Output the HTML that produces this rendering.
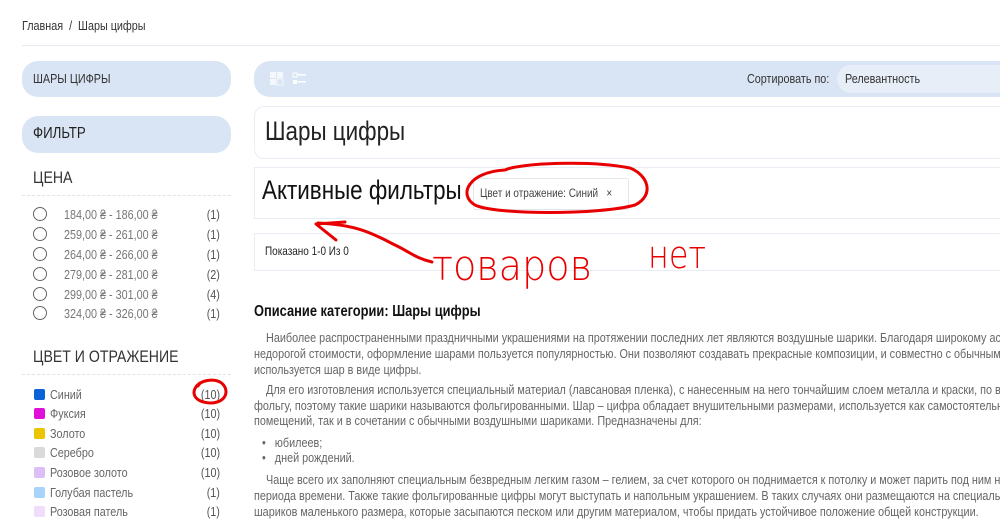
<!DOCTYPE html>
<html><head><meta charset="utf-8"><style>
html,body{margin:0;padding:0;width:1000px;height:524px;overflow:hidden;background:#fff;}
body{font-family:"Liberation Sans","Noto Sans CJK SC",sans-serif;color:#222;position:relative;}
.a{position:absolute;white-space:nowrap;}
.t{position:absolute;white-space:nowrap;transform:scaleX(.83);transform-origin:0 0;}
.box{position:absolute;background:#d9e5f4;border-radius:16px;}
.wb{position:absolute;border:1px solid #e8edf3;border-radius:10px 0 0 10px;border-right:none;}
.radio{position:absolute;left:33px;width:12px;height:12px;border:1.5px solid #666;border-radius:50%;}
.pr{position:absolute;left:64px;font-size:13px;color:#777;white-space:nowrap;transform:scaleX(.83);transform-origin:0 0;}
.cnt{position:absolute;right:780px;font-size:13px;color:#555;transform:scaleX(.83);transform-origin:100% 0;}
.sw{position:absolute;left:34px;width:11px;height:11px;border-radius:2px;}
.cl{position:absolute;left:50px;font-size:13px;color:#666;white-space:nowrap;transform:scaleX(.83);transform-origin:0 0;}
.p{position:absolute;left:254px;font-size:12.5px;color:#666;white-space:nowrap;transform:scaleX(.865);transform-origin:0 0;}
</style></head><body>
<div class="t" style="left:22px;top:18px;font-size:13px;color:#333">Главная &nbsp;/&nbsp; Шары цифры</div>
<div class="a" style="left:22px;top:45px;width:978px;height:1px;background:#e6ebf2"></div>

<div class="box" style="left:22px;top:61px;width:209px;height:36px"></div>
<div class="t" style="left:33px;top:71px;font-size:13px;color:#333">ШАРЫ ЦИФРЫ</div>
<div class="box" style="left:22px;top:116px;width:209px;height:37px"></div>
<div class="t" style="left:33px;top:125px;font-size:16px;color:#222">ФИЛЬТР</div>
<div class="t" style="left:33px;top:168px;font-size:17px;color:#333">ЦЕНА</div>
<div class="a" style="left:22px;top:195px;width:209px;border-top:1px dashed #dde3ea"></div>

<div class="radio" style="top:207px"></div><div class="pr" style="top:207px">184,00 ₴ - 186,00 ₴</div><div class="cnt" style="top:207px">(1)</div>
<div class="radio" style="top:227px"></div><div class="pr" style="top:227px">259,00 ₴ - 261,00 ₴</div><div class="cnt" style="top:227px">(1)</div>
<div class="radio" style="top:247px"></div><div class="pr" style="top:247px">264,00 ₴ - 266,00 ₴</div><div class="cnt" style="top:247px">(1)</div>
<div class="radio" style="top:267px"></div><div class="pr" style="top:267px">279,00 ₴ - 281,00 ₴</div><div class="cnt" style="top:267px">(2)</div>
<div class="radio" style="top:287px"></div><div class="pr" style="top:287px">299,00 ₴ - 301,00 ₴</div><div class="cnt" style="top:287px">(4)</div>
<div class="radio" style="top:306px"></div><div class="pr" style="top:306px">324,00 ₴ - 326,00 ₴</div><div class="cnt" style="top:306px">(1)</div>

<div class="t" style="left:33px;top:347px;font-size:17px;color:#333">ЦВЕТ И ОТРАЖЕНИЕ</div>
<div class="a" style="left:22px;top:374px;width:209px;border-top:1px dashed #dde3ea"></div>
<div class="sw" style="top:389px;background:#0b63d6"></div><div class="cl" style="top:387px">Синий</div><div class="cnt" style="top:387px">(10)</div>
<div class="sw" style="top:408px;background:#e010d8"></div><div class="cl" style="top:406px">Фуксия</div><div class="cnt" style="top:406px">(10)</div>
<div class="sw" style="top:428px;background:#ecc400"></div><div class="cl" style="top:426px">Золото</div><div class="cnt" style="top:426px">(10)</div>
<div class="sw" style="top:447px;background:#dadada"></div><div class="cl" style="top:445px">Серебро</div><div class="cnt" style="top:445px">(10)</div>
<div class="sw" style="top:467px;background:#dcbff7"></div><div class="cl" style="top:465px">Розовое золото</div><div class="cnt" style="top:465px">(10)</div>
<div class="sw" style="top:487px;background:#a8d4fb"></div><div class="cl" style="top:485px">Голубая пастель</div><div class="cnt" style="top:485px">(1)</div>
<div class="sw" style="top:506px;background:#f0dcfb"></div><div class="cl" style="top:504px">Розовая патель</div><div class="cnt" style="top:504px">(1)</div>

<div class="box" style="left:254px;top:61px;width:760px;height:36px;border-radius:16px 0 0 16px"></div>
<svg class="a" style="left:268px;top:70px" width="40" height="20">
<rect x="2" y="2" width="6" height="6" fill="#f4f8fd"/><rect x="9" y="2" width="6" height="6" fill="#f4f8fd"/><rect x="2" y="9" width="6" height="6" fill="#f4f8fd"/><rect x="9" y="9" width="6" height="6" fill="none" stroke="#f4f8fd"/>
<rect x="25" y="3" width="4" height="4" fill="none" stroke="#fff"/><rect x="30" y="4" width="8" height="1.5" fill="#fff"/><rect x="25" y="10" width="4" height="4" fill="#fff"/><rect x="30" y="11" width="8" height="1.5" fill="#fff"/>
</svg>
<div class="t" style="left:747px;top:71px;font-size:13px;color:#333">Сортировать по:</div>
<div class="a" style="left:837px;top:65px;width:170px;height:28px;background:#e7eef8;border-radius:14px 0 0 14px"></div>
<div class="t" style="left:845px;top:71px;font-size:13px;color:#333">Релевантность</div>

<div class="wb" style="left:254px;top:106px;width:750px;height:51px"></div>
<div class="t" style="left:265px;top:116px;font-size:27px;color:#222">Шары цифры</div>
<div class="wb" style="left:254px;top:167px;width:750px;height:50px;border-radius:0"></div>
<div class="t" style="left:262px;top:175px;font-size:27px;color:#111">Активные фильтры</div>
<div class="a" style="left:473px;top:178px;width:154px;height:30px;border:1px solid #e3e7ec;border-radius:3px"></div>
<div class="t" style="left:480px;top:186px;font-size:12px;color:#444">Цвет и отражение: Синий &nbsp;&nbsp;×</div>
<div class="wb" style="left:254px;top:233px;width:750px;height:36px;border-radius:0"></div>
<div class="t" style="left:265px;top:244px;font-size:12px;color:#222">Показано 1-0 Из 0</div>

<div class="t" style="left:254px;top:303px;font-size:15.5px;font-weight:bold;color:#111">Описание категории: Шары цифры</div>
<div class="p" style="top:331px">&nbsp;&nbsp;&nbsp;&nbsp;Наиболее распространенными праздничными украшениями на протяжении последних лет являются воздушные шарики. Благодаря широкому ассортименту</div>
<div class="p" style="top:347px">недорогой стоимости, оформление шарами пользуется популярностью. Они позволяют создавать прекрасные композиции, и совместно с обычными в</div>
<div class="p" style="top:363px">используется шар в виде цифры.</div>
<div class="p" style="top:383px">&nbsp;&nbsp;&nbsp;&nbsp;Для его изготовления используется специальный материал (лавсановая пленка), с нанесенным на него тончайшим слоем металла и краски, по внешнему</div>
<div class="p" style="top:399px">фольгу, поэтому такие шарики называются фольгированными. Шар – цифра обладает внушительными размерами, используется как самостоятельный</div>
<div class="p" style="top:414px">помещений, так и в сочетании с обычными воздушными шариками. Предназначены для:</div>
<div class="p" style="top:436px;left:262px">•&nbsp;&nbsp; юбилеев;</div>
<div class="p" style="top:451px;left:262px">•&nbsp;&nbsp; дней рождений.</div>
<div class="p" style="top:473px">&nbsp;&nbsp;&nbsp;&nbsp;Чаще всего их заполняют специальным безвредным легким газом – гелием, за счет которого он поднимается к потолку и может парить под ним на</div>
<div class="p" style="top:489px">периода времени. Также такие фольгированные цифры могут выступать и напольным украшением. В таких случаях они размещаются на специально</div>
<div class="p" style="top:505px">шариков маленького размера, которые засыпаются песком или другим материалом, чтобы придать устойчивое положение общей конструкции.</div>

<svg class="a" style="left:0;top:0" width="1000" height="524">
<g fill="none" stroke="#e80000" stroke-width="3" stroke-linecap="round" stroke-linejoin="round">
<path d="M505 170 C468 172 458 195 475 205 C495 215 600 215 635 205 C655 195 648 175 630 168 C590 160 520 163 505 170"/>
<path d="M200 383 C190 390 192 402 210 403 C228 403 230 388 220 382 C212 378 200 381 198 386"/>
<path d="M318 223 C360 225 375 235 395 245 C410 252 415 258 432 262"/>
<path d="M345 222 L316 224 L336 240"/>
</g>
<text x="432" y="280" font-family="DejaVu Sans, sans-serif" font-weight="200" font-size="42" fill="#e80000" textLength="160" lengthAdjust="spacingAndGlyphs">товаров</text>
<text x="648" y="268" font-family="DejaVu Sans, sans-serif" font-weight="200" font-size="38" fill="#e80000" textLength="58" lengthAdjust="spacingAndGlyphs">нет</text>
</svg>
</body></html>
